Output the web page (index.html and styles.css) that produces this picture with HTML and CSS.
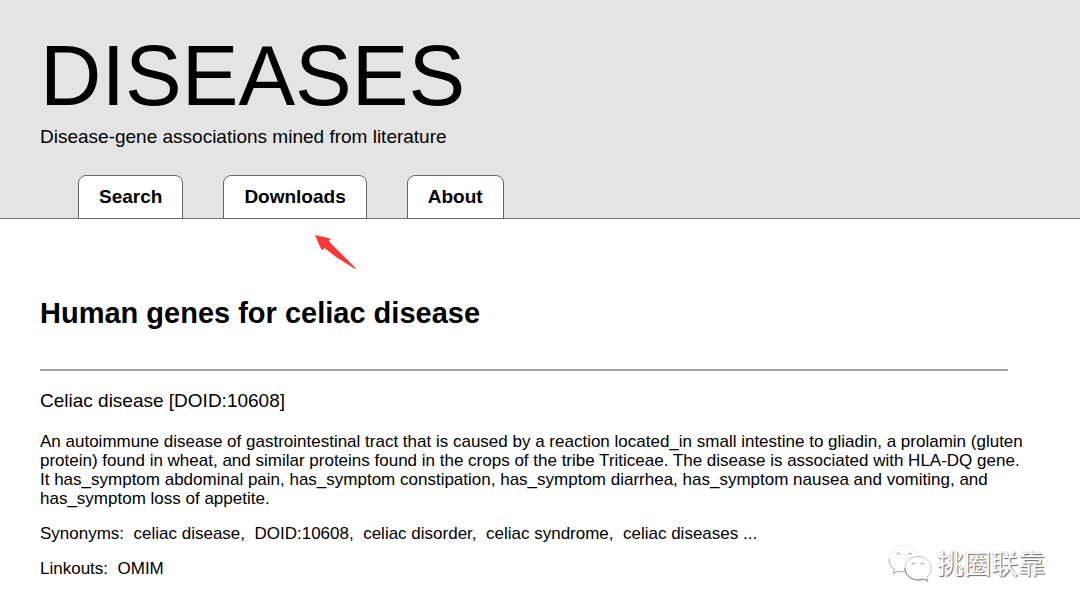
FILE: index.html
```html
<!DOCTYPE html>
<html lang="en">
<head>
<meta charset="utf-8">
<meta name="viewport" content="width=device-width, initial-scale=1">
<title>DISEASES - Human genes for celiac disease</title>
<link rel="stylesheet" href="styles.css">
</head>
<body>
<header class="header">
  <h1 class="site-title">DISEASES</h1>
  <p class="tagline">Disease-gene associations mined from literature</p>
  <nav class="tabs">
    <a class="tab" href="#search">Search</a>
    <a class="tab" href="#downloads">Downloads
      <svg class="pointer" viewBox="0 0 42 35" width="42" height="35" aria-hidden="true">
        <path fill="#fb3836" d="M1 0 L17 3.700 L14.800 6 L16.700 8.300 L27 18.500 L42 33.500 L40.500 33.800 L22 22 L10.500 13 L8.300 15.200 L7 14 Z"/>
      </svg>
    </a>
    <a class="tab" href="#about">About</a>
  </nav>
</header>
<main class="content">
  <h2 class="page-title">Human genes for celiac disease</h2>
  <hr class="rule">
  <h3 class="entry-name">Celiac disease [DOID:10608]</h3>
  <p class="text">An autoimmune disease of gastrointestinal tract that is caused by a reaction located_in small intestine to gliadin, a prolamin (gluten protein) found in wheat, and similar proteins found in the crops of the tribe Triticeae. The disease is associated with HLA-DQ gene. It has_symptom abdominal pain, has_symptom constipation, has_symptom diarrhea, has_symptom nausea and vomiting, and has_symptom loss of appetite.</p>
  <p class="text">Synonyms:&nbsp; celiac disease,&nbsp; DOID:10608,&nbsp; celiac disorder,&nbsp; celiac syndrome,&nbsp; celiac diseases ...</p>
  <p class="text">Linkouts:&nbsp; <a class="link" href="#omim">OMIM</a></p>
</main>
<div class="watermark">
  <svg class="watermark-icon" viewBox="0 0 44 38" width="44" height="38" aria-hidden="true">
    <g fill="#fff" stroke-linejoin="round">
      <path stroke="#e2e2e2" stroke-width="1" stroke-dasharray="2 1" d="M1 15 C1 7 7 1 15.500 1 C23 1 28.500 5.500 30 12"/>
      <path stroke="#a4a4a4" stroke-width="1" d="M1 15 C1 20 3 23 6.500 25.500 L5.500 29.500 L10.500 27 C13 28 15.500 28 18 27.500"/>
      <path stroke="#c4c4c4" stroke-width="1" d="M30 12.500 C22.500 12.500 17 17.500 17 24 C17 31 23 36 30 36 C32 36 34 35.500 35.500 35 L40 37 L39 33 C41.500 31 43 28 43 24 C43 17.500 37.500 12.500 30 12.500 Z"/>
    </g>
    <path fill="none" stroke="#858585" stroke-width="1" d="M17 24 C17 31 23 36 30 36 C32 36 34 35.500 35.500 35 L40 37"/>
    <path fill="none" stroke="#999" stroke-width="1" d="M8.500 10.500 Q10.500 7.500 12.500 10.500 M20 10.500 Q22 7.500 24 10.500 M23.500 20.500 Q25.500 17.500 27.500 20.500 M32.500 20.500 Q34.500 17.500 36.500 20.500"/>
  </svg>
  <span class="watermark-text" lang="zh-CN">挑圈联靠</span>
</div>
</body>
</html>
```

FILE: styles.css
```css
* {
  box-sizing: border-box;
}

body {
  margin: 0;
  background: #fff;
  color: #000;
  font-family: "Liberation Sans", Arial, sans-serif;
  font-size: 17px;
  line-height: 19px;
}

.header {
  padding: 28px 40px 0;
  background: #e4e4e4;
  border-bottom: 1px solid #777;
}

.site-title {
  margin: 0;
  font-size: 85px;
  font-weight: 400;
  line-height: 96px;
}

.tagline {
  margin: 0;
  padding-top: 1px;
  font-size: 19px;
  line-height: 24px;
}

.tabs {
  display: flex;
  gap: 40px;
  margin: 26px 38px -1px;
}

.tab {
  position: relative;
  padding: 10px 20px;
  border: 1px solid #666;
  border-radius: 8px 8px 0 0;
  background: #fff;
  color: #000;
  font-size: 19px;
  font-weight: 700;
  line-height: 22px;
  text-decoration: none;
}

.pointer {
  position: absolute;
  top: 59px;
  left: 90px;
}

.content {
  padding: 78px 52px 32px 40px;
}

.page-title {
  margin: 0 0 40px;
  font-size: 29px;
  line-height: 32px;
}

.rule {
  height: 2px;
  margin: 0 20px 18px 0;
  border: 0;
  background: #a4a4a4;
}

.entry-name {
  margin: 0 0 19px;
  font-size: 19px;
  font-weight: 400;
  line-height: 24px;
}

.text {
  margin: 0 0 16px;
}

.link {
  color: inherit;
  text-decoration: none;
}

.watermark {
  position: absolute;
  right: 35px;
  bottom: 30px;
  display: flex;
  align-items: center;
  gap: 5px;
}

.watermark-text {
  color: #fff;
  font-family: "Noto Sans CJK SC", sans-serif;
  font-size: 27px;
  line-height: 38px;
  text-shadow: 1px 1px 1px #666, 0 0 1px #aaa;
}
```
